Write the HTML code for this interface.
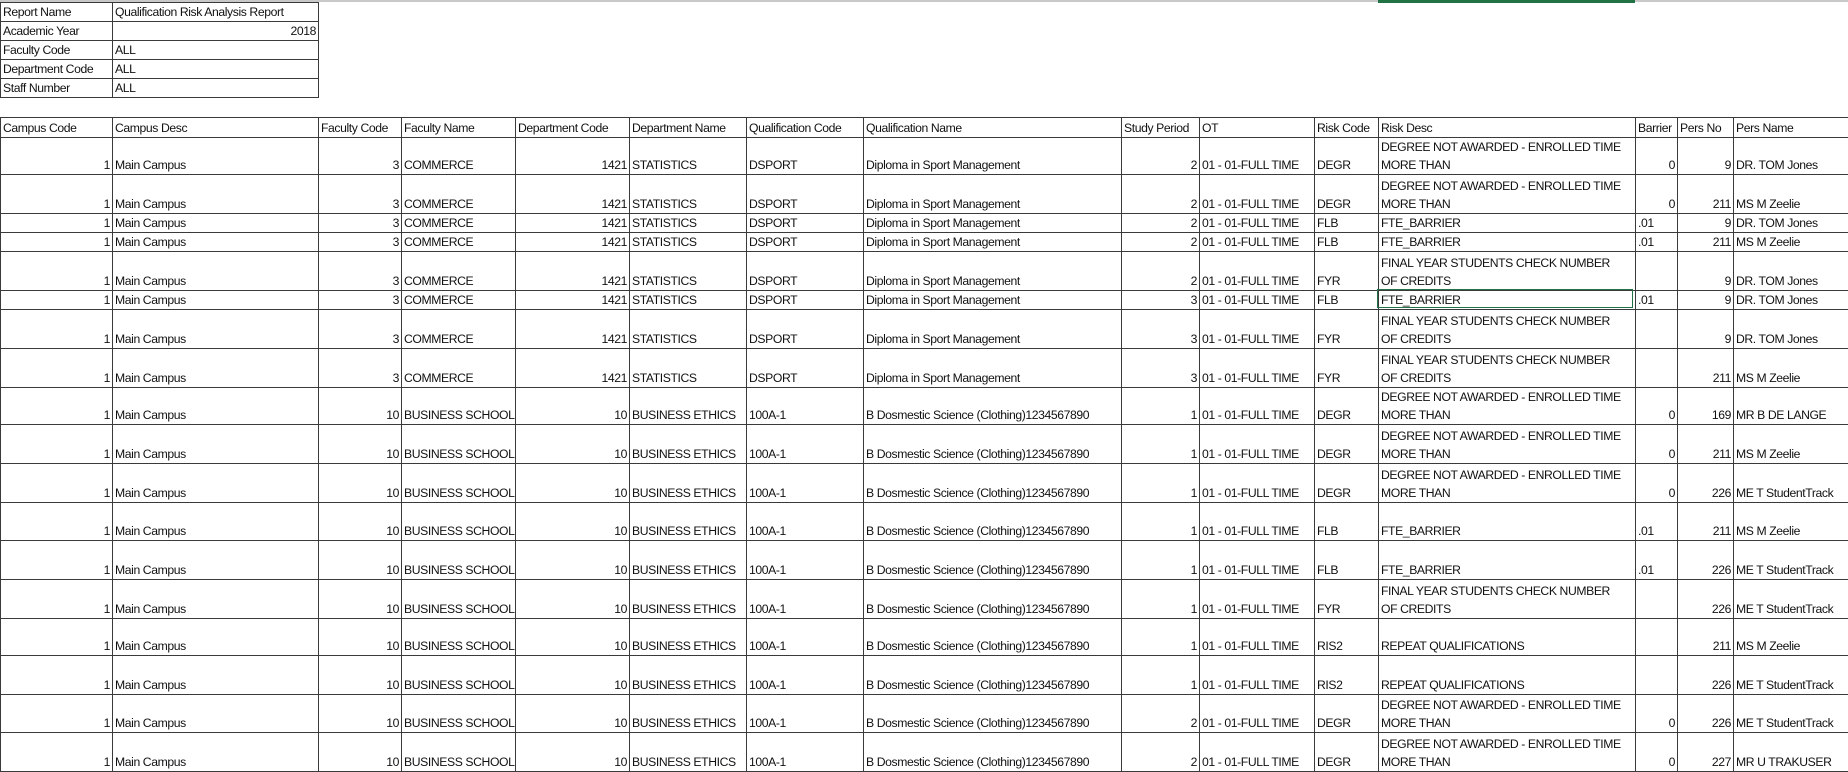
<!DOCTYPE html>
<html><head><meta charset="utf-8"><style>
body{margin:0;width:1848px;height:767px;overflow:hidden;background:#fff;font-family:"Liberation Sans",sans-serif;font-size:12.2px;letter-spacing:-0.4px;color:#111;position:relative}
table{border-collapse:collapse;table-layout:fixed;position:absolute;left:0}
td{border:1px solid #3a3a3a;padding:0 2px;vertical-align:bottom;white-space:nowrap;overflow:hidden;line-height:18px}
td.r{text-align:right}
#topline{position:absolute;left:0;top:0;width:1848px;height:2px;background:#c8c8c8}
#green{position:absolute;left:1378px;top:0;width:257px;height:3px;background:#217346}
#sel{position:absolute;left:1377px;top:289px;width:256px;height:19px;border:1px solid #217346;box-sizing:border-box}
</style></head><body>
<div id="topline"></div><div id="green"></div>
<table style="top:2px;width:318px">
<colgroup><col style="width:112px"><col style="width:206px"></colgroup>
<tr style="height:19px"><td>Report Name</td><td>Qualification Risk Analysis Report</td></tr>
<tr style="height:19px"><td>Academic Year</td><td class="r">2018</td></tr>
<tr style="height:19px"><td>Faculty Code</td><td>ALL</td></tr>
<tr style="height:19px"><td>Department Code</td><td>ALL</td></tr>
<tr style="height:19px"><td>Staff Number</td><td>ALL</td></tr>
</table>
<table style="top:117px;width:1849px">
<colgroup><col style="width:112px"><col style="width:206px"><col style="width:83px"><col style="width:114px"><col style="width:114px"><col style="width:117px"><col style="width:117px"><col style="width:258px"><col style="width:78px"><col style="width:115px"><col style="width:64px"><col style="width:257px"><col style="width:42px"><col style="width:56px"><col style="width:116px"></colgroup>
<tr style="height:20px"><td>Campus Code</td><td>Campus Desc</td><td>Faculty Code</td><td>Faculty Name</td><td>Department Code</td><td>Department Name</td><td>Qualification Code</td><td>Qualification Name</td><td>Study Period</td><td>OT</td><td>Risk Code</td><td>Risk Desc</td><td>Barrier</td><td>Pers No</td><td>Pers Name</td></tr>
<tr style="height:37px"><td class="r">1</td><td>Main Campus</td><td class="r">3</td><td>COMMERCE</td><td class="r">1421</td><td>STATISTICS</td><td>DSPORT</td><td>Diploma in Sport Management</td><td class="r">2</td><td>01 - 01-FULL TIME</td><td>DEGR</td><td>DEGREE NOT AWARDED - ENROLLED TIME<br>MORE THAN</td><td class="r">0</td><td class="r">9</td><td>DR. TOM Jones</td></tr>
<tr style="height:39px"><td class="r">1</td><td>Main Campus</td><td class="r">3</td><td>COMMERCE</td><td class="r">1421</td><td>STATISTICS</td><td>DSPORT</td><td>Diploma in Sport Management</td><td class="r">2</td><td>01 - 01-FULL TIME</td><td>DEGR</td><td>DEGREE NOT AWARDED - ENROLLED TIME<br>MORE THAN</td><td class="r">0</td><td class="r">211</td><td>MS M Zeelie</td></tr>
<tr style="height:19px"><td class="r">1</td><td>Main Campus</td><td class="r">3</td><td>COMMERCE</td><td class="r">1421</td><td>STATISTICS</td><td>DSPORT</td><td>Diploma in Sport Management</td><td class="r">2</td><td>01 - 01-FULL TIME</td><td>FLB</td><td>FTE_BARRIER</td><td>.01</td><td class="r">9</td><td>DR. TOM Jones</td></tr>
<tr style="height:19px"><td class="r">1</td><td>Main Campus</td><td class="r">3</td><td>COMMERCE</td><td class="r">1421</td><td>STATISTICS</td><td>DSPORT</td><td>Diploma in Sport Management</td><td class="r">2</td><td>01 - 01-FULL TIME</td><td>FLB</td><td>FTE_BARRIER</td><td>.01</td><td class="r">211</td><td>MS M Zeelie</td></tr>
<tr style="height:39px"><td class="r">1</td><td>Main Campus</td><td class="r">3</td><td>COMMERCE</td><td class="r">1421</td><td>STATISTICS</td><td>DSPORT</td><td>Diploma in Sport Management</td><td class="r">2</td><td>01 - 01-FULL TIME</td><td>FYR</td><td>FINAL YEAR STUDENTS CHECK NUMBER<br>OF CREDITS</td><td></td><td class="r">9</td><td>DR. TOM Jones</td></tr>
<tr style="height:19px"><td class="r">1</td><td>Main Campus</td><td class="r">3</td><td>COMMERCE</td><td class="r">1421</td><td>STATISTICS</td><td>DSPORT</td><td>Diploma in Sport Management</td><td class="r">3</td><td>01 - 01-FULL TIME</td><td>FLB</td><td>FTE_BARRIER</td><td>.01</td><td class="r">9</td><td>DR. TOM Jones</td></tr>
<tr style="height:39px"><td class="r">1</td><td>Main Campus</td><td class="r">3</td><td>COMMERCE</td><td class="r">1421</td><td>STATISTICS</td><td>DSPORT</td><td>Diploma in Sport Management</td><td class="r">3</td><td>01 - 01-FULL TIME</td><td>FYR</td><td>FINAL YEAR STUDENTS CHECK NUMBER<br>OF CREDITS</td><td></td><td class="r">9</td><td>DR. TOM Jones</td></tr>
<tr style="height:39px"><td class="r">1</td><td>Main Campus</td><td class="r">3</td><td>COMMERCE</td><td class="r">1421</td><td>STATISTICS</td><td>DSPORT</td><td>Diploma in Sport Management</td><td class="r">3</td><td>01 - 01-FULL TIME</td><td>FYR</td><td>FINAL YEAR STUDENTS CHECK NUMBER<br>OF CREDITS</td><td></td><td class="r">211</td><td>MS M Zeelie</td></tr>
<tr style="height:37px"><td class="r">1</td><td>Main Campus</td><td class="r">10</td><td>BUSINESS SCHOOL</td><td class="r">10</td><td>BUSINESS ETHICS</td><td>100A-1</td><td>B Dosmestic Science (Clothing)1234567890</td><td class="r">1</td><td>01 - 01-FULL TIME</td><td>DEGR</td><td>DEGREE NOT AWARDED - ENROLLED TIME<br>MORE THAN</td><td class="r">0</td><td class="r">169</td><td>MR B DE LANGE</td></tr>
<tr style="height:39px"><td class="r">1</td><td>Main Campus</td><td class="r">10</td><td>BUSINESS SCHOOL</td><td class="r">10</td><td>BUSINESS ETHICS</td><td>100A-1</td><td>B Dosmestic Science (Clothing)1234567890</td><td class="r">1</td><td>01 - 01-FULL TIME</td><td>DEGR</td><td>DEGREE NOT AWARDED - ENROLLED TIME<br>MORE THAN</td><td class="r">0</td><td class="r">211</td><td>MS M Zeelie</td></tr>
<tr style="height:39px"><td class="r">1</td><td>Main Campus</td><td class="r">10</td><td>BUSINESS SCHOOL</td><td class="r">10</td><td>BUSINESS ETHICS</td><td>100A-1</td><td>B Dosmestic Science (Clothing)1234567890</td><td class="r">1</td><td>01 - 01-FULL TIME</td><td>DEGR</td><td>DEGREE NOT AWARDED - ENROLLED TIME<br>MORE THAN</td><td class="r">0</td><td class="r">226</td><td>ME T StudentTrack</td></tr>
<tr style="height:38px"><td class="r">1</td><td>Main Campus</td><td class="r">10</td><td>BUSINESS SCHOOL</td><td class="r">10</td><td>BUSINESS ETHICS</td><td>100A-1</td><td>B Dosmestic Science (Clothing)1234567890</td><td class="r">1</td><td>01 - 01-FULL TIME</td><td>FLB</td><td>FTE_BARRIER</td><td>.01</td><td class="r">211</td><td>MS M Zeelie</td></tr>
<tr style="height:39px"><td class="r">1</td><td>Main Campus</td><td class="r">10</td><td>BUSINESS SCHOOL</td><td class="r">10</td><td>BUSINESS ETHICS</td><td>100A-1</td><td>B Dosmestic Science (Clothing)1234567890</td><td class="r">1</td><td>01 - 01-FULL TIME</td><td>FLB</td><td>FTE_BARRIER</td><td>.01</td><td class="r">226</td><td>ME T StudentTrack</td></tr>
<tr style="height:39px"><td class="r">1</td><td>Main Campus</td><td class="r">10</td><td>BUSINESS SCHOOL</td><td class="r">10</td><td>BUSINESS ETHICS</td><td>100A-1</td><td>B Dosmestic Science (Clothing)1234567890</td><td class="r">1</td><td>01 - 01-FULL TIME</td><td>FYR</td><td>FINAL YEAR STUDENTS CHECK NUMBER<br>OF CREDITS</td><td></td><td class="r">226</td><td>ME T StudentTrack</td></tr>
<tr style="height:37px"><td class="r">1</td><td>Main Campus</td><td class="r">10</td><td>BUSINESS SCHOOL</td><td class="r">10</td><td>BUSINESS ETHICS</td><td>100A-1</td><td>B Dosmestic Science (Clothing)1234567890</td><td class="r">1</td><td>01 - 01-FULL TIME</td><td>RIS2</td><td>REPEAT QUALIFICATIONS</td><td></td><td class="r">211</td><td>MS M Zeelie</td></tr>
<tr style="height:39px"><td class="r">1</td><td>Main Campus</td><td class="r">10</td><td>BUSINESS SCHOOL</td><td class="r">10</td><td>BUSINESS ETHICS</td><td>100A-1</td><td>B Dosmestic Science (Clothing)1234567890</td><td class="r">1</td><td>01 - 01-FULL TIME</td><td>RIS2</td><td>REPEAT QUALIFICATIONS</td><td></td><td class="r">226</td><td>ME T StudentTrack</td></tr>
<tr style="height:38px"><td class="r">1</td><td>Main Campus</td><td class="r">10</td><td>BUSINESS SCHOOL</td><td class="r">10</td><td>BUSINESS ETHICS</td><td>100A-1</td><td>B Dosmestic Science (Clothing)1234567890</td><td class="r">2</td><td>01 - 01-FULL TIME</td><td>DEGR</td><td>DEGREE NOT AWARDED - ENROLLED TIME<br>MORE THAN</td><td class="r">0</td><td class="r">226</td><td>ME T StudentTrack</td></tr>
<tr style="height:39px"><td class="r">1</td><td>Main Campus</td><td class="r">10</td><td>BUSINESS SCHOOL</td><td class="r">10</td><td>BUSINESS ETHICS</td><td>100A-1</td><td>B Dosmestic Science (Clothing)1234567890</td><td class="r">2</td><td>01 - 01-FULL TIME</td><td>DEGR</td><td>DEGREE NOT AWARDED - ENROLLED TIME<br>MORE THAN</td><td class="r">0</td><td class="r">227</td><td>MR U TRAKUSER</td></tr>
</table>
<div id="sel"></div>
</body></html>
